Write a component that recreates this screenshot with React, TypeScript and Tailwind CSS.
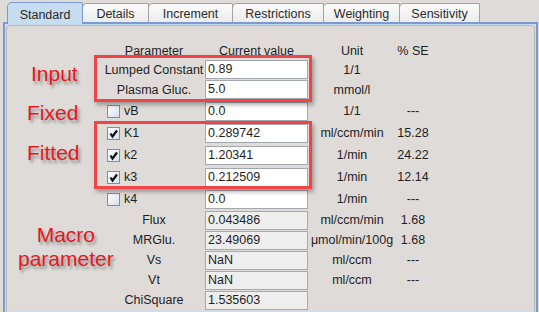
import React from "react";

type Row = {
  label: string;
  value: string;
  unit?: string;
  se?: string;
  kind: "input" | "check" | "macro";
  checked?: boolean;
};

const rows: Row[] = [
  { label: "Lumped Constant", value: "0.89", unit: "1/1", kind: "input" },
  { label: "Plasma Gluc.", value: "5.0", unit: "mmol/l", kind: "input" },
  { label: "vB", value: "0.0", unit: "1/1", se: "---", kind: "check" },
  { label: "K1", value: "0.289742", unit: "ml/ccm/min", se: "15.28", kind: "check", checked: true },
  { label: "k2", value: "1.20341", unit: "1/min", se: "24.22", kind: "check", checked: true },
  { label: "k3", value: "0.212509", unit: "1/min", se: "12.14", kind: "check", checked: true },
  { label: "k4", value: "0.0", unit: "1/min", se: "---", kind: "check" },
  { label: "Flux", value: "0.043486", unit: "ml/ccm/min", se: "1.68", kind: "macro" },
  { label: "MRGlu.", value: "23.49069", unit: "μmol/min/100g", se: "1.68", kind: "macro" },
  { label: "Vs", value: "NaN", unit: "ml/ccm", se: "---", kind: "macro" },
  { label: "Vt", value: "NaN", unit: "ml/ccm", se: "---", kind: "macro" },
  { label: "ChiSquare", value: "1.535603", kind: "macro" },
];

const tabs = [
  { name: "Standard", w: "w-[76px]" },
  { name: "Details", w: "w-[67px]" },
  { name: "Increment", w: "w-[85px]" },
  { name: "Restrictions", w: "w-[92px]" },
  { name: "Weighting", w: "w-[77px]" },
  { name: "Sensitivity", w: "w-[81px]" },
];

function CheckBox({ checked }: { checked?: boolean }) {
  return (
    <div className="w-[13px] h-[13px] border border-[#7d8ea3] bg-gradient-to-br from-[#fdfeff] to-[#d5e1ee] flex items-center justify-center">
      {checked && (
        <svg width="11" height="11" viewBox="0 0 11 11">
          <path d="M2.5 5.5 L4.5 8.5 L9 2.5" fill="none" stroke="#111" strokeWidth="2.2" />
        </svg>
      )}
    </div>
  );
}

function Annot({ children, className }: { children: React.ReactNode; className: string }) {
  return (
    <div
      className={`text-[21px] leading-[24px] text-[#e3191f] text-center w-max [text-shadow:2px_3px_3px_rgba(0,0,0,0.35)] ${className}`}
    >
      {children}
    </div>
  );
}

export default function App() {
  return (
    <div className="relative w-[539px] h-[312px] overflow-hidden bg-[#dedbd8] font-['Liberation_Sans',Arial,sans-serif] text-[12.5px] text-[#1e1e1e]">
      {/* tabs */}
      <div className="h-[22px] flex items-end pl-[7px]">
        {tabs.map((t, i) =>
          i === 0 ? (
            <div
              key={t.name}
              className={`${t.w} h-[22px] -mb-[2px] relative z-10 border-l border-t border-r border-[#7b9bd0] rounded-tl-[5px] rounded-tr-[2px] bg-[#c6dcf1] text-center pt-[3px] text-[#2a2a2a]`}
            >
              {t.name}
            </div>
          ) : (
            <div
              key={t.name}
              className={`${t.w} -ml-px h-[19px] border-l border-t border-r border-[#a3a3a3] rounded-tl-[5px] rounded-tr-[2px] bg-gradient-to-b from-[#fbfbfb] to-[#ececec] text-center pt-[1px] text-[#2a2a2a]`}
            >
              {t.name}
            </div>
          )
        )}
      </div>

      {/* panel */}
      <div className="ml-[3px] mr-[1px] h-[292px] border-2 border-[#7b9bd0] shadow-[inset_0_0_0_1px_#c8dcf1] p-px">
        <div className="h-[320px] border border-[#b9b9b9] rounded-[4px] pt-[14px] flex">
          {/* annotations */}
          <div className="w-[96px] flex flex-col">
            <Annot className="mt-[22px] ml-[24px]">Input</Annot>
            <Annot className="mt-[15px] ml-[20px]">Fixed</Annot>
            <Annot className="mt-[16px] ml-[20px]">Fitted</Annot>
            <Annot className="mt-[58px] ml-[11px]">
              Macro
              <br />
              parameter
            </Annot>
          </div>

          {/* table */}
          <div className="grid grid-cols-[102px_103px_88px_34px] content-start">
            <div className="h-[20px] pt-[2px] flex items-center justify-center">Parameter</div>
            <div className="h-[20px] pt-[2px] flex items-center justify-center">Current value</div>
            <div className="h-[20px] pt-[2px] flex items-center justify-center">Unit</div>
            <div className="h-[20px] pt-[2px] flex items-center justify-center">% SE</div>

            {rows.map((r) => {
              const h = r.kind === "check" ? "h-[22px]" : "h-[20px]";
              return (
                <React.Fragment key={r.label}>
                  {r.kind === "check" ? (
                    <div className={`${h} flex items-center gap-[4px] pl-[4px]`}>
                      <CheckBox checked={r.checked} />
                      <span>{r.label}</span>
                    </div>
                  ) : (
                    <div className={`${h} flex items-center justify-center whitespace-nowrap`}>{r.label}</div>
                  )}
                  <div className={`${h} flex ${r.kind === "input" ? "items-start" : "items-center"}`}>
                    <div
                      className={`w-full h-[19px] leading-[17px] px-[2px] border ${
                        r.kind === "macro" ? "bg-[#eeeeee] border-[#a9a9a9]" : "bg-white border-[#a3a8ae]"
                      }`}
                    >
                      {r.value}
                    </div>
                  </div>
                  <div className={`${h} flex items-center justify-center whitespace-nowrap`}>{r.unit}</div>
                  <div className={`${h} flex items-center justify-center`}>{r.se}</div>
                </React.Fragment>
              );
            })}
          </div>
        </div>
      </div>

      {/* highlight boxes */}
      <div className="absolute left-[94px] top-[55px] w-[218px] h-[47px] border-[3px] border-[#f04547] shadow-[2px_3px_4px_rgba(0,0,0,0.3)]" />
      <div className="absolute left-[94px] top-[121px] w-[218px] h-[68px] border-[3px] border-[#f04547] shadow-[2px_3px_4px_rgba(0,0,0,0.3)]" />
    </div>
  );
}
